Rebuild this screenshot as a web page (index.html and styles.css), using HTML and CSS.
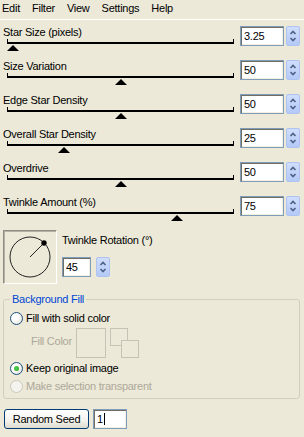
FILE: index.html
```html
<!DOCTYPE html>
<html lang="en">
<head>
    <meta charset="UTF-8">
    <title>Star Field</title>
    <link rel="stylesheet" href="styles.css">
</head>
<body>
    <div class="menubar">
        <span class="menu-item">Edit</span>
        <span class="menu-item">Filter</span>
        <span class="menu-item">View</span>
        <span class="menu-item">Settings</span>
        <span class="menu-item">Help</span>
    </div>

    <div class="sliders">
        <div class="slider-row">
            <div class="slider">
                <div class="slider-label">Star Size (pixels)</div>
                <div class="track"><span class="thumb" style="left: 2.2%"></span></div>
            </div>
            <div class="edit">3.25</div>
            <div class="spin"><svg width="14" height="20" viewBox="0 0 14 20"><path d="M4.5 8 L7 5.5 L9.5 8" /><path d="M4.5 12 L7 14.5 L9.5 12" /></svg></div>
        </div>
        <div class="slider-row">
            <div class="slider">
                <div class="slider-label">Size Variation</div>
                <div class="track"><span class="thumb" style="left: 50%"></span></div>
            </div>
            <div class="edit">50</div>
            <div class="spin"><svg width="14" height="20" viewBox="0 0 14 20"><path d="M4.5 8 L7 5.5 L9.5 8" /><path d="M4.5 12 L7 14.5 L9.5 12" /></svg></div>
        </div>
        <div class="slider-row">
            <div class="slider">
                <div class="slider-label">Edge Star Density</div>
                <div class="track"><span class="thumb" style="left: 50%"></span></div>
            </div>
            <div class="edit">50</div>
            <div class="spin"><svg width="14" height="20" viewBox="0 0 14 20"><path d="M4.5 8 L7 5.5 L9.5 8" /><path d="M4.5 12 L7 14.5 L9.5 12" /></svg></div>
        </div>
        <div class="slider-row">
            <div class="slider">
                <div class="slider-label">Overall Star Density</div>
                <div class="track"><span class="thumb" style="left: 25%"></span></div>
            </div>
            <div class="edit">25</div>
            <div class="spin"><svg width="14" height="20" viewBox="0 0 14 20"><path d="M4.5 8 L7 5.5 L9.5 8" /><path d="M4.5 12 L7 14.5 L9.5 12" /></svg></div>
        </div>
        <div class="slider-row">
            <div class="slider">
                <div class="slider-label">Overdrive</div>
                <div class="track"><span class="thumb" style="left: 50%"></span></div>
            </div>
            <div class="edit">50</div>
            <div class="spin"><svg width="14" height="20" viewBox="0 0 14 20"><path d="M4.5 8 L7 5.5 L9.5 8" /><path d="M4.5 12 L7 14.5 L9.5 12" /></svg></div>
        </div>
        <div class="slider-row">
            <div class="slider">
                <div class="slider-label">Twinkle Amount (%)</div>
                <div class="track"><span class="thumb" style="left: 75%"></span></div>
            </div>
            <div class="edit">75</div>
            <div class="spin"><svg width="14" height="20" viewBox="0 0 14 20"><path d="M4.5 8 L7 5.5 L9.5 8" /><path d="M4.5 12 L7 14.5 L9.5 12" /></svg></div>
        </div>
    </div>

    <div class="rotation">
        <div class="dial">
            <svg width="52" height="52" viewBox="0 0 52 52">
                <circle cx="26" cy="26" r="20" fill="none" stroke="#222" stroke-width="1" />
                <line x1="26" y1="26" x2="40" y2="12" stroke="#222" stroke-width="1" />
                <circle cx="40" cy="12" r="2.7" fill="#000" />
            </svg>
        </div>
        <div class="rotation-side">
            <div class="slider-label">Twinkle Rotation (°)</div>
            <div class="rotation-input">
                <div class="edit edit-small">45</div>
                <div class="spin"><svg width="14" height="20" viewBox="0 0 14 20"><path d="M4.5 8 L7 5.5 L9.5 8" /><path d="M4.5 12 L7 14.5 L9.5 12" /></svg></div>
            </div>
        </div>
    </div>

    <fieldset class="group">
        <legend>Background Fill</legend>
        <div class="option">
            <span class="radio"></span>
            <span>Fill with solid color</span>
        </div>
        <div class="fill-row">
            <span class="fill-label">Fill Color</span>
            <span class="swatch"></span>
            <svg class="swap" width="29" height="30" viewBox="0 0 29 30">
                <rect x="0.5" y="0.5" width="17" height="17" fill="#ece9d8" stroke="#c6c3b6" />
                <rect x="11.5" y="12.5" width="17" height="17" fill="#ece9d8" stroke="#c6c3b6" />
            </svg>
        </div>
        <div class="option">
            <span class="radio checked"></span>
            <span>Keep original image</span>
        </div>
        <div class="option disabled">
            <span class="radio"></span>
            <span>Make selection transparent</span>
        </div>
    </fieldset>

    <div class="seed-row">
        <button class="button">Random Seed</button>
        <div class="edit edit-seed">1<span class="caret"></span></div>
    </div>
</body>
</html>
```

FILE: styles.css
```css
body {
    margin: 0;
    background: #ece9d8;
    color: #000;
    font-family: 'Liberation Sans', Arial, sans-serif;
    font-size: 11px;
    letter-spacing: -0.25px;
    width: 304px;
    height: 437px;
    overflow: hidden;
}

.menubar {
    display: flex;
    gap: 12px;
    height: 20px;
    padding: 2px 0 0 2px;
    box-sizing: border-box;
    line-height: 13px;
    border-bottom: 1px solid #fff;
}

.slider-row {
    display: flex;
    align-items: flex-start;
    height: 34px;
    padding: 6px 4px 0 3px;
    box-sizing: border-box;
}

.slider {
    flex: 1;
    margin-right: 6px;
}

.slider-label {
    line-height: 13px;
    white-space: nowrap;
}

.track {
    position: relative;
    height: 3px;
    margin-left: 4px;
    border: 1px solid #000;
    border-top: none;
    border-bottom-width: 2px;
}

.thumb {
    position: absolute;
    top: 6px;
    margin-left: -6px;
    width: 0;
    height: 0;
    border-left: 6px solid transparent;
    border-right: 6px solid transparent;
    border-bottom: 6px solid #000;
}

.edit {
    width: 44px;
    height: 20px;
    box-sizing: border-box;
    padding: 3px 0 0 3px;
    line-height: 13px;
    background: #fff;
    border: 1px solid #7f9db9;
    box-shadow: inset 1px 1px 0 #716f64, inset -1px -1px 0 #f1efe2;
}

.spin {
    width: 14px;
    height: 20px;
    margin-left: 2px;
    box-sizing: border-box;
    border: 1px solid #aec3f2;
    border-radius: 2px;
    background: linear-gradient(#d0defc, #b4c9f7);
}

.spin svg {
    display: block;
    margin: -1px;
}

.spin path {
    fill: none;
    stroke: #4d6185;
    stroke-width: 1.6;
}

.rotation {
    display: flex;
    margin-top: 6px;
    padding-left: 3px;
}

.dial {
    width: 54px;
    height: 54px;
    box-sizing: border-box;
    border: 1px solid;
    border-color: #8f8d83 #fff #fff #8f8d83;
    box-shadow: inset 1px 1px 0 #b5b3a8;
}

.dial svg {
    display: block;
}

.rotation-side {
    margin-left: 5px;
    padding-top: 4px;
}

.rotation-input {
    display: flex;
    margin-top: 10px;
}

.edit-small {
    width: 29px;
}

.rotation-input .spin {
    margin-left: 5px;
}

.group {
    margin: 9px 4px 0 3px;
    padding: 4px 4px 4px 6px;
    border: 1px solid #d0d0bf;
    border-radius: 3px;
}

.group legend {
    padding: 0 2px;
    line-height: 13px;
    color: #0046d5;
}

.option {
    display: flex;
    align-items: center;
    gap: 3px;
    height: 16px;
}

.option + .option,
.fill-row + .option {
    margin-top: 2px;
}

.radio {
    width: 13px;
    height: 13px;
    box-sizing: border-box;
    border: 1px solid #1c5180;
    border-radius: 50%;
    background: radial-gradient(circle at 35% 35%, #fff 30%, #dcd9cd 100%);
    display: flex;
    align-items: center;
    justify-content: center;
}

.radio.checked::after {
    content: "";
    width: 5px;
    height: 5px;
    border-radius: 50%;
    background: radial-gradient(circle at 40% 40%, #55d355, #21a121);
}

.disabled {
    color: #aca899;
}

.disabled .radio {
    border-color: #cac8bb;
    background: #f4f3ee;
}

.fill-row {
    display: flex;
    align-items: flex-start;
    height: 30px;
    margin-top: 2px;
    padding-left: 21px;
    color: #aca899;
}

.fill-label {
    width: 45px;
    margin-top: 7px;
    line-height: 13px;
}

.swatch {
    width: 30px;
    height: 30px;
    box-sizing: border-box;
    border: 1px solid #c6c3b6;
}

.swap {
    display: block;
    margin-left: 4px;
}

.seed-row {
    display: flex;
    margin-top: 10px;
    padding-left: 4px;
}

.button {
    width: 85px;
    height: 20px;
    padding: 0;
    font-family: inherit;
    font-size: 11px;
    letter-spacing: inherit;
    color: #000;
    border: 1px solid #003c74;
    border-radius: 3px;
    background: linear-gradient(#fff, #f3f2ec 60%, #dedbcd);
}

.edit-seed {
    width: 34px;
    margin-left: 4px;
}

.caret {
    display: inline-block;
    width: 1px;
    height: 12px;
    margin-left: 1px;
    vertical-align: -2px;
    background: #000;
}
```
